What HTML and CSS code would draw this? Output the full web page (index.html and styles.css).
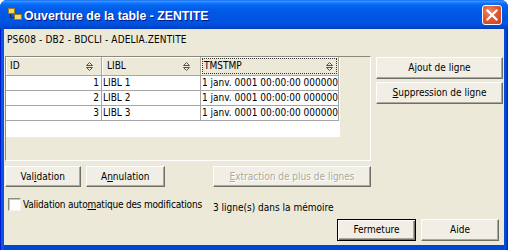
FILE: index.html
```html
<!DOCTYPE html>
<html lang="fr">
<head>
<meta charset="utf-8">
<title>Ouverture de la table - ZENTITE</title>
<link rel="stylesheet" href="styles.css">
</head>
<body>
<div class="window">
  <div class="titlebar">
    <svg class="app-icon" width="14" height="14" viewBox="0 0 14 14">
      <path d="M2.5 6 V10.5 H7" stroke="#2a2a2a" stroke-width="1" fill="none"/>
      <rect x="0.5" y="1.5" width="6" height="5" fill="#F4D66E" stroke="#9C7A1E"/>
      <rect x="6.5" y="7.5" width="7" height="5" fill="#F4D66E" stroke="#9C7A1E"/>
    </svg>
    <span class="title">Ouverture de la table - ZENTITE</span>
    <span class="close">
      <svg width="18" height="18" viewBox="0 0 18 18">
        <path d="M4.5 4.5 L13.5 13.5 M13.5 4.5 L4.5 13.5" stroke="#fff" stroke-width="2.2" stroke-linecap="square"/>
      </svg>
    </span>
  </div>
  <div class="client">
    <div class="subtitle">PS608 - DB2 - BDCLI - ADELIA.ZENTITE</div>
    <div class="main">
      <div class="left">
        <div class="grid">
          <div class="pane">
            <div class="row head">
              <div class="cell c-id"><span class="htext">ID</span><svg class="sort" width="7" height="9" viewBox="0 0 7 9"><path d="M0.5 3.5 L3.5 0.5 L6.5 3.5 Z M0.5 5.5 L3.5 8.5 L6.5 5.5 Z" fill="none" stroke="#555"/></svg></div>
              <div class="cell c-lib"><span class="htext">LIBL</span><svg class="sort" width="7" height="9" viewBox="0 0 7 9"><path d="M0.5 3.5 L3.5 0.5 L6.5 3.5 Z M0.5 5.5 L3.5 8.5 L6.5 5.5 Z" fill="none" stroke="#555"/></svg></div>
              <div class="cell c-ts"><div class="focus"><span class="htext">TMSTMP</span><svg class="sort" width="7" height="9" viewBox="0 0 7 9"><path d="M0.5 3.5 L3.5 0.5 L6.5 3.5 Z M0.5 5.5 L3.5 8.5 L6.5 5.5 Z" fill="none" stroke="#555"/></svg></div></div>
            </div>
            <div class="row">
              <div class="cell c-id num">1</div>
              <div class="cell c-lib">LIBL 1</div>
              <div class="cell c-ts">1 janv. 0001 00:00:00 000000</div>
            </div>
            <div class="row">
              <div class="cell c-id num">2</div>
              <div class="cell c-lib">LIBL 2</div>
              <div class="cell c-ts">1 janv. 0001 00:00:00 000000</div>
            </div>
            <div class="row">
              <div class="cell c-id num">3</div>
              <div class="cell c-lib">LIBL 3</div>
              <div class="cell c-ts">1 janv. 0001 00:00:00 000000</div>
            </div>
          </div>
        </div>
        <div class="btnrow">
          <button class="btn b-val">Val<u>i</u>dation</button>
          <button class="btn b-ann">A<u>n</u>nulation</button>
          <button class="btn b-ext" disabled><u>E</u>xtraction de plus de lignes</button>
        </div>
      </div>
      <div class="side">
        <button class="btn b-side">Ajout de ligne</button>
        <button class="btn b-side"><u>S</u>uppression de ligne</button>
      </div>
    </div>
    <div class="status">
      <div class="chk"><span class="box"></span><span class="chk-label">Validation auto<u>m</u>atique des modifications</span></div>
      <span class="count">3 ligne(s) dans la mémoire</span>
    </div>
    <div class="footer">
      <button class="btn b-ferm default">Fermeture</button>
      <button class="btn b-aide">Aide</button>
    </div>
  </div>
</div>
</body>
</html>
```
FILE: styles.css
```css
* { box-sizing: border-box; }
html, body { margin: 0; padding: 0; background: #ffffff; }
body {
  width: 508px;
  height: 250px;
  overflow: hidden;
  font-family: "DejaVu Sans Condensed", "DejaVu Sans", sans-serif;
  font-stretch: condensed;
  font-size: 10px;
  color: #000;
}
.window {
  width: 508px;
  height: 250px;
  display: flex;
  flex-direction: column;
  border-radius: 7px 7px 0 0;
  overflow: hidden;
  background: linear-gradient(to right, #0019cf 0, #0019cf 1px, #0855dd 1px, #0a5ae8 3px, #0046d5 4px, #0046d5 calc(100% - 4px), #0a4fe0 calc(100% - 3px), #0036c0 calc(100% - 1px), #001ea0 100%);
}
.titlebar {
  height: 29px;
  flex: none;
  display: flex;
  align-items: flex-start;
  padding: 0 6px 0 8px;
  background: linear-gradient(to bottom, #0a5fea 0, #3d95ff 1px, #2a89ff 2px, #1077ff 3px, #0468f5 5px, #015fea 8px, #0059e6 12px, #0055e3 18px, #0053e0 23px, #004ed9 25px, #0048cf 27px, #003cbd 29px);
}
.app-icon { margin-top: 7px; flex: none; }
.title {
  flex: 1;
  margin: 9px 0 0 2px;
  font-family: "Liberation Sans", Arial, sans-serif;
  font-stretch: normal;
  font-weight: bold;
  font-size: 12.3px;
  line-height: 14px;
  color: #fff;
  text-shadow: 1px 1px #0a1883;
  white-space: nowrap;
}
.close {
  margin-top: 5px;
  width: 20px;
  height: 20px;
  flex: none;
  border: 1px solid #fff;
  border-radius: 3px;
  background: radial-gradient(circle at 35% 30%, #ec8a6a 0, #e25a33 45%, #c8411e 100%);
  display: flex;
  align-items: center;
  justify-content: center;
}
.client {
  flex: 1;
  margin: 0 4px 5px 4px;
  background: #ece9d8;
  display: flex;
  flex-direction: column;
}
.subtitle {
  height: 27px;
  flex: none;
  padding: 5px 0 0 3px;
  line-height: 12px;
  letter-spacing: 0.15px;
  white-space: nowrap;
}
.main { display: flex; gap: 5px; flex: none; }
.left { width: 367px; padding-left: 1px; }
.grid {
  height: 105px;
  border: 1px solid;
  border-color: #8c8a80 #ffffff #ffffff #8c8a80;
  background: #ece9d8;
}
.pane { width: 334px; height: 80px; background: #fff; }
.row { display: flex; height: 15px; }
.row.head { height: 19px; }
.cell {
  border-right: 1px solid #a5a5a5;
  border-bottom: 1px solid #a5a5a5;
  line-height: 14px;
  white-space: nowrap;
  overflow: hidden;
}
.c-id { width: 96px; }
.c-lib { width: 99px; padding-left: 1px; }
.c-ts { width: 138px; padding-left: 1px; }
.num { text-align: right; padding-right: 2px; }
.head .cell {
  background: #ece9d8;
  box-shadow: inset 1px 1px #ffffff;
  border-color: #aca899;
  display: flex;
  align-items: center;
  justify-content: space-between;
  line-height: 12px;
}
.head .c-id { padding: 0 8px 0 4px; }
.head .c-lib { padding: 0 10px 0 5px; }
.head .c-ts { padding: 1px 1px 1px 1px; }
.focus {
  flex: 1;
  height: 100%;
  border: 1px dotted #333;
  display: flex;
  align-items: center;
  justify-content: space-between;
  padding: 0 3px 0 1px;
}
.sort { flex: none; display: block; }
.btnrow { display: flex; margin-top: 5px; }
.btn {
  font-family: inherit;
  font-stretch: condensed;
  font-size: 10px;
  color: #000;
  margin: 0;
  padding: 0;
  height: 21px;
  line-height: 12px;
  background: #f1efe5;
  border: 1px solid;
  border-color: #ffffff #716f64 #716f64 #ffffff;
  box-shadow: inset -1px -1px #aca899;
  white-space: nowrap;
}
.btn u { text-decoration: underline; text-underline-offset: 1px; }
.b-val { width: 76px; }
.b-ann { width: 80px; margin-left: 5px; }
.b-ext { width: 159px; margin-left: 48px; color: #aca899; text-shadow: 1px 1px #ffffff; }
.side { display: flex; flex-direction: column; gap: 3px; padding-top: 1px; }
.b-side { width: 127px; height: 22px; }
.status { display: flex; height: 13px; margin-top: 11px; padding-left: 4px; flex: none; }
.chk { width: 205px; display: flex; align-items: center; line-height: 13px; white-space: nowrap; }
.chk-label { letter-spacing: -0.2px; }
.box {
  width: 13px;
  height: 13px;
  flex: none;
  margin-right: 2px;
  background: #fff;
  border: 1px solid;
  border-color: #8c8a80 #f4f3ee #f4f3ee #8c8a80;
  box-shadow: inset 1px 1px #c8c6bb;
}
.count { margin-top: 4px; line-height: 12px; white-space: nowrap; }
.footer { display: flex; justify-content: flex-end; gap: 5px; padding-right: 5px; margin-top: 8px; flex: none; }
.b-ferm { width: 79px; height: 22px; }
.b-aide { width: 78px; height: 22px; }
.default {
  border-color: #000;
  box-shadow: inset 1px 1px #ffffff, inset -1px -1px #716f64, inset -2px -2px #aca899;
}
```
